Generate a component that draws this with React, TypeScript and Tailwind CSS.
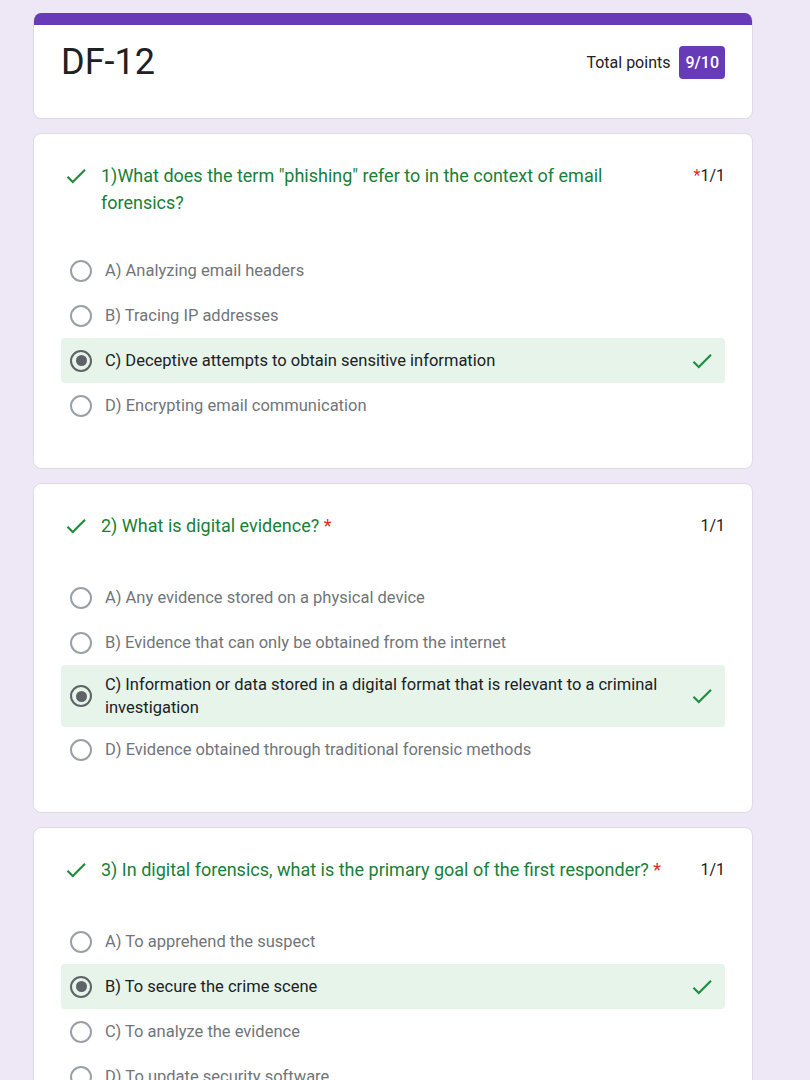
import React from 'react';

type Option = { label: string; selected?: boolean };
type Question = { title: string; star: 'before' | 'after'; options: Option[]; gap: string };

const questions: Question[] = [
  {
    title: '1)What does the term "phishing" refer to in the context of email forensics?',
    star: 'before',
    gap: 'mt-[32px]',
    options: [
      { label: 'A) Analyzing email headers' },
      { label: 'B) Tracing IP addresses' },
      { label: 'C) Deceptive attempts to obtain sensitive information', selected: true },
      { label: 'D) Encrypting email communication' },
    ],
  },
  {
    title: '2) What is digital evidence?',
    star: 'after',
    gap: 'mt-[36px]',
    options: [
      { label: 'A) Any evidence stored on a physical device' },
      { label: 'B) Evidence that can only be obtained from the internet' },
      {
        label: 'C) Information or data stored in a digital format that is relevant to a criminal investigation',
        selected: true,
      },
      { label: 'D) Evidence obtained through traditional forensic methods' },
    ],
  },
  {
    title: '3) In digital forensics, what is the primary goal of the first responder?',
    star: 'after',
    gap: 'mt-[36px]',
    options: [
      { label: 'A) To apprehend the suspect' },
      { label: 'B) To secure the crime scene', selected: true },
      { label: 'C) To analyze the evidence' },
      { label: 'D) To update security software' },
    ],
  },
];

const Check: React.FC<{ className?: string }> = ({ className }) => (
  <svg viewBox="0 0 24 24" className={className} fill="currentColor">
    <path d="M9 16.17L4.83 12l-1.42 1.41L9 19 21 7l-1.41-1.41z" />
  </svg>
);

const Radio: React.FC<{ selected?: boolean }> = ({ selected }) => (
  <div
    className={`w-[22px] h-[22px] shrink-0 rounded-full border-2 flex items-center justify-center ${
      selected ? 'border-[#5f6368]' : 'border-[#9aa0a6]'
    }`}
  >
    {selected && <div className="w-[11px] h-[11px] rounded-full bg-[#5f6368]" />}
  </div>
);

const QuestionCard: React.FC<{ q: Question }> = ({ q }) => (
  <div className="bg-white rounded-lg border border-[#dadce0] px-[27px] pt-[28px] pb-[40px]">
    <div className="flex items-start">
      <Check className="w-[26px] h-[26px] text-[#1e8e3e] mt-[1px] ml-[2px] shrink-0" />
      <div className="flex-1 ml-[12px] pr-4 text-[18px] leading-[27px] text-[#188038]">
        {q.title}
        {q.star === 'after' && <span className="text-[#d93025]"> *</span>}
      </div>
      <div className="text-[16px] leading-[27px] text-[#202124] shrink-0">
        {q.star === 'before' && <span className="text-[#d93025]">*</span>}
        1/1
      </div>
    </div>
    <div className={q.gap}>
      {q.options.map((o) => (
        <div
          key={o.label}
          className={`flex items-center rounded pl-[9px] pr-[10px] min-h-[45px] py-[8px] ${
            o.selected ? 'bg-[#e6f4ea]' : ''
          }`}
        >
          <Radio selected={o.selected} />
          <div
            className={`flex-1 ml-[13px] text-[16.5px] leading-[23px] ${
              o.selected ? 'text-[#202124]' : 'text-[#70757a]'
            }`}
          >
            {o.label}
          </div>
          {o.selected && <Check className="w-[26px] h-[26px] text-[#1e8e3e] shrink-0 ml-4" />}
        </div>
      ))}
    </div>
  </div>
);

export default function App() {
  return (
    <div
      className="min-h-screen bg-[#ede7f6] pt-[13px] pl-[33px]"
      style={{ fontFamily: 'Roboto, "Noto Sans", Arial, sans-serif' }}
    >
      <div className="w-[720px] flex flex-col gap-[14px]">
        <div className="bg-white rounded-lg border border-t-0 border-[#dadce0] overflow-hidden">
          <div className="h-[12px] bg-[#673ab7]" />
          <div className="flex items-start justify-between px-[27px] pt-[13px] pb-[32px]">
            <div className="text-[36px] leading-[48px] text-[#202124]">DF-12</div>
            <div className="flex items-center mt-[8px]">
              <span className="text-[16px] text-[#202124]">Total points</span>
              <span className="ml-[9px] bg-[#673ab7] text-white text-[16px] font-medium rounded px-[6px] h-[33px] flex items-center">
                9/10
              </span>
            </div>
          </div>
        </div>
        {questions.map((q) => (
          <QuestionCard key={q.title} q={q} />
        ))}
      </div>
    </div>
  );
}
